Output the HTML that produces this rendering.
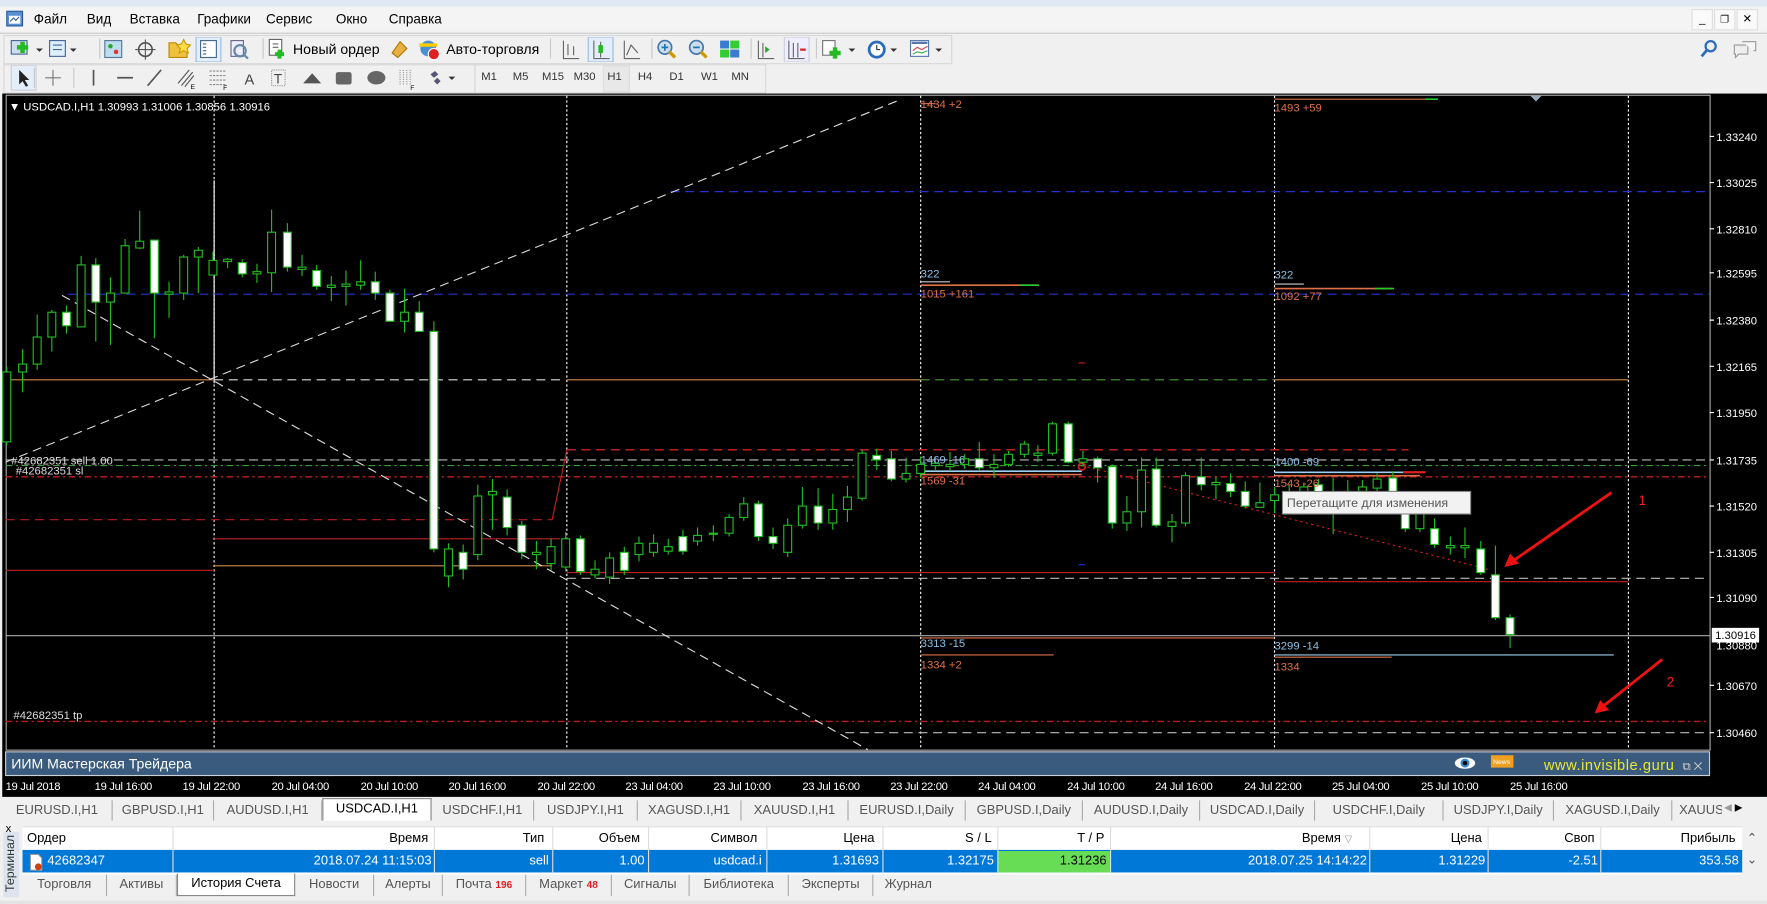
<!DOCTYPE html>
<html><head><meta charset="utf-8">
<style>
html,body{margin:0;padding:0;overflow:hidden;background:#f0f0f0;width:1767px;height:904px}
#r{position:absolute;left:0;top:0;width:1568px;height:802px;transform:scale(1.12691,1.1272);transform-origin:0 0;font-family:"Liberation Sans",sans-serif;color:#000;background:#f0f0f0}
.a{position:absolute;white-space:nowrap}
.m{font-size:12px;top:10px}
.sep{position:absolute;width:1px;background:#c8c8c8}
.ico{position:absolute}
.tf{font-size:10px;color:#333;top:63px}
.tab{position:absolute;top:710px;height:18px;font-size:11.5px;color:#555;line-height:18px;border-right:1px solid #aaa;box-sizing:border-box;text-align:center;white-space:nowrap;overflow:hidden}
.th{position:absolute;top:734px;font-size:11.5px;line-height:20px;height:20px}
.td{position:absolute;top:755px;font-size:11.5px;line-height:19px;height:19px;color:#fff;text-align:right}
.bt{position:absolute;top:776px;height:19px;line-height:19px;font-size:11.5px;color:#555;border-right:1px solid #aaa;box-sizing:border-box;text-align:center;white-space:nowrap}
</style></head><body><div id="r">
<div class="a" style="left:0;top:0;width:1568px;height:6px;background:#dfe8f3"></div>
<div class="a" style="left:0;top:6px;width:1568px;height:22px;background:#f4f4f4"></div>
<svg class="ico" style="left:5px;top:9px" width="16" height="16"><rect x="1" y="1" width="14" height="13" fill="#5a8fd0" stroke="#2a5a9a"/><rect x="3" y="5" width="10" height="7" fill="#fff"/><path d="M4 10l3-3 2 2 3-3" stroke="#3060a0" fill="none"/></svg>
<span class="a m" style="left:30px">Файл</span><span class="a m" style="left:77px">Вид</span><span class="a m" style="left:115px">Вставка</span><span class="a m" style="left:175px">Графики</span><span class="a m" style="left:236px">Сервис</span><span class="a m" style="left:298px">Окно</span><span class="a m" style="left:345px">Справка</span>
<div class="a" style="left:1501px;top:8px;width:17px;height:17px;border:1px solid #ddd;background:#fafafa;font-size:10px;text-align:center;line-height:17px">_</div>
<div class="a" style="left:1521px;top:8px;width:17px;height:17px;border:1px solid #ddd;background:#fafafa;font-size:9px;text-align:center;line-height:17px">&#x2750;</div>
<div class="a" style="left:1541px;top:8px;width:17px;height:17px;border:1px solid #ddd;background:#fafafa;font-size:10px;text-align:center;line-height:17px">✕</div>
<div class="a" style="left:0;top:29px;width:1568px;height:1px;background:#ccc"></div>
<div class="a" style="left:3px;top:31px;width:840px;height:24px;border:1px solid #d8d8d8"></div>
<svg class="ico" style="left:8px;top:33px" width="850" height="22">
<g>
<rect x="2" y="3" width="14" height="12" fill="#cde" stroke="#469"/><path d="M7 9h10M12 4v10" stroke="#2b2" stroke-width="4"/><path d="M24 10l3 3 3-3z" fill="#333"/>
<rect x="36" y="3" width="14" height="14" fill="#def" stroke="#469"/><path d="M39 7h8M39 11h8" stroke="#469"/><path d="M54 10l3 3 3-3z" fill="#333"/>
<rect x="85" y="3" width="15" height="15" fill="#bde" stroke="#579"/><circle cx="90" cy="8" r="2" fill="#2a2"/><circle cx="95" cy="13" r="2" fill="#d33"/>
<circle cx="121" cy="11" r="6" fill="none" stroke="#555" stroke-width="1.5"/><path d="M121 2v18M112 11h18" stroke="#555"/>
<path d="M142 5h6l2 2h8v11h-16z" fill="#f0c040" stroke="#b80"/><path d="M155 2l2 4 4 1-3 3 1 4-4-2-4 2 1-4-3-3 4-1z" fill="#fd4" stroke="#c90"/>
<rect x="166" y="0" width="22" height="22" fill="#e4eefa" stroke="#9bd"/><rect x="170" y="3" width="14" height="15" fill="#fff" stroke="#468"/><path d="M172 6h3M172 9h3M172 12h3M172 15h3" stroke="#468"/>
<rect x="197" y="3" width="11" height="14" fill="#eef" stroke="#668"/><circle cx="205" cy="12" r="5" fill="none" stroke="#68a" stroke-width="2"/><path d="M208 15l4 4" stroke="#68a" stroke-width="2"/>
<rect x="231" y="2" width="11" height="14" fill="#fff" stroke="#666"/><path d="M234 6h5M234 9h5" stroke="#666"/><path d="M236 15h8M240 11v8" stroke="#2b2" stroke-width="3.5"/>
</g>
<text x="252" y="15" font-size="12.5" font-family="Liberation Sans">Новый ордер</text>
<path d="M340 14l7-10 6 6-8 8z" fill="#e8b040" stroke="#a70"/>
<circle cx="372" cy="10" r="7" fill="#4a90d0"/><path d="M364 7h16" stroke="#fc0" stroke-width="3"/><circle cx="377" cy="15" r="5" fill="#d22" stroke="#fff"/>
<text x="388" y="15" font-size="12.5" font-family="Liberation Sans">Авто-торговля</text>
<path d="M492 3v16h14M496 6v10M501 8v8" stroke="#666" fill="none"/>
<rect x="514" y="0" width="22" height="22" fill="#e4eefa" stroke="#9bd"/><path d="M519 3v16h14M525 4v14" stroke="#666" fill="none"/><rect x="523" y="7" width="4" height="7" fill="#2b2"/>
<path d="M546 3v16h14M548 16l4-9 6 7" stroke="#666" fill="none"/>
<circle cx="582" cy="9" r="6" fill="#cde" stroke="#47a" stroke-width="1.5"/><path d="M579 9h6M582 6v6" stroke="#27a" stroke-width="1.5"/><path d="M586 13l5 5" stroke="#c90" stroke-width="3"/>
<circle cx="610" cy="9" r="6" fill="#cde" stroke="#47a" stroke-width="1.5"/><path d="M607 9h6" stroke="#27a" stroke-width="1.5"/><path d="M614 13l5 5" stroke="#c90" stroke-width="3"/>
<rect x="631" y="3" width="8" height="7" fill="#3a7ad0"/><rect x="640" y="3" width="8" height="7" fill="#3c3"/><rect x="631" y="11" width="8" height="7" fill="#3c3"/><rect x="640" y="11" width="8" height="7" fill="#3a7ad0"/>
<path d="M665 3v16h14M669 5v13" stroke="#666" fill="none"/><path d="M671 8l4 3-4 3z" fill="#2a2"/>
<rect x="688" y="0" width="22" height="22" fill="#eef" stroke="#ccd"/><path d="M692 3v16h14M696 5v13M700 5v13" stroke="#666" fill="none"/><path d="M702 11h5" stroke="#d22" stroke-width="2"/>
<rect x="722" y="3" width="11" height="13" fill="#fff" stroke="#777"/><path d="M728 14h10M733 9v10" stroke="#2b2" stroke-width="4"/><path d="M745 10l3 3 3-3z" fill="#333"/>
<circle cx="770" cy="11" r="8" fill="#2a6cc0"/><circle cx="770" cy="11" r="5.5" fill="#fff"/><path d="M770 7v4h3" stroke="#333" fill="none"/><path d="M782 10l3 3 3-3z" fill="#333"/>
<rect x="800" y="3" width="16" height="14" fill="#fff" stroke="#57a"/><path d="M801 5h14" stroke="#57a" stroke-width="2"/><path d="M802 12l4-3 4 2 5-3" stroke="#d44" fill="none"/><path d="M802 15l4-2 4 1 5-2" stroke="#4a4" fill="none"/><path d="M822 10l3 3 3-3z" fill="#333"/>
</svg>
<div class="sep" style="left:88px;top:34px;height:18px"></div><div class="sep" style="left:233px;top:34px;height:18px"></div><div class="sep" style="left:488px;top:34px;height:18px"></div><div class="sep" style="left:578px;top:34px;height:18px"></div><div class="sep" style="left:666px;top:34px;height:18px"></div><div class="sep" style="left:724px;top:34px;height:18px"></div>
<svg class="ico" style="left:1505px;top:34px" width="60" height="20"><circle cx="13" cy="7" r="4.5" fill="none" stroke="#2a6cc0" stroke-width="2"/><path d="M10 10l-5 6" stroke="#2a6cc0" stroke-width="2.5"/><path d="M34 6h12v8h-8l-3 3v-3h-1z" fill="#eee" stroke="#999"/><path d="M41 3h12v8h-2" fill="#f6f6f6" stroke="#999"/></svg>
<div class="a" style="left:3px;top:57px;width:417px;height:24px;border:1px solid #d8d8d8"></div>
<div class="a" style="left:421px;top:57px;width:257px;height:24px;border:1px solid #d8d8d8"></div>
<svg class="ico" style="left:6px;top:58px" width="420" height="23">
<rect x="4" y="0" width="22" height="22" fill="#e4eefa" stroke="#ccd"/><path d="M11 4v13l3-3 3 5 2-1-3-5h4z" fill="#222"/>
<path d="M41 4v14M34 11h14" stroke="#777"/>
<path d="M77 4v14" stroke="#555" stroke-width="1.5"/>
<path d="M98 11h14" stroke="#555" stroke-width="1.5"/>
<path d="M125 18l12-14" stroke="#555" stroke-width="1.5"/>
<path d="M152 16l10-12M155 18l10-12M158 19l8-10" stroke="#555"/><text x="163" y="21" font-size="6">E</text>
<path d="M180 5h14M180 9h14M180 13h14M180 17h14" stroke="#888" stroke-dasharray="2 1"/><text x="192" y="22" font-size="6">F</text>
<text x="211" y="17" font-size="13" fill="#444" font-family="Liberation Sans">A</text>
<rect x="235" y="4" width="12" height="14" fill="none" stroke="#999" stroke-dasharray="1 1"/><text x="237" y="16" font-size="12" fill="#444">T</text>
<path d="M263 16l8-9 8 9z" fill="#555"/>
<rect x="292" y="6" width="14" height="11" rx="2" fill="#666"/>
<ellipse cx="328" cy="11" rx="8" ry="6" fill="#666"/>
<path d="M349 4v14M352 4v14M355 4v14M358 4v14" stroke="#999" stroke-dasharray="1 1"/><text x="358" y="22" font-size="6">F</text>
<path d="M376 8l4-3 3 3-4 3zM379 14l3-3 3 3-3 3z" fill="#557"/><path d="M392 10l3 3 3-3z" fill="#333"/>
</svg>
<div class="sep" style="left:30px;top:60px;height:18px"></div><div class="sep" style="left:65px;top:60px;height:18px"></div>
<div class="a" style="left:535px;top:58px;width:22px;height:22px;background:#e8e8e8;border:1px solid #ddd"></div>
<span class="a tf" style="left:427px">M1</span><span class="a tf" style="left:455px">M5</span><span class="a tf" style="left:481px">M15</span><span class="a tf" style="left:509px">M30</span><span class="a tf" style="left:539px">H1</span><span class="a tf" style="left:566px">H4</span><span class="a tf" style="left:594px">D1</span><span class="a tf" style="left:622px">W1</span><span class="a tf" style="left:649px">MN</span>
<div class="a" style="left:2px;top:83px;width:1566px;height:624px;background:#000"></div>
<svg class="a" style="left:0;top:0" width="1568" height="710" font-family="Liberation Sans">
<rect x="5.5" y="84.5" width="1512" height="581" fill="none" stroke="#aaa"/>
<g stroke="#fff" stroke-dasharray="2 2" stroke-width="1">
<path d="M190 85v580M503 85v580M817 85v580M1131 85v580M1445 85v580"/></g>
<path d="M190 160v180" stroke="#fff"/>
<path d="M595 170H1517M60 261H1517" stroke="#2233cc" stroke-dasharray="8 5"/>
<path d="M5 337H190M503 337H817M1131 337H1445" stroke="#d08848"/>
<path d="M190 337H497" stroke="#ddd" stroke-dasharray="8 5"/>
<path d="M817 337H1131" stroke="#4a9a3a" stroke-dasharray="8 5"/>
<path d="M503 399H1250" stroke="#b82020" stroke-dasharray="8 5" stroke-width="1.3"/>
<path d="M5 408H1517" stroke="#bbb" stroke-dasharray="8 4"/>
<path d="M5 413H1517" stroke="#3a9a3a" stroke-dasharray="6 3 2 3"/>
<path d="M5 423H1517" stroke="#c02020" stroke-dasharray="6 3 2 3" stroke-width="1.2"/>
<path d="M5 461H490" stroke="#b82020" stroke-dasharray="8 5"/>
<path d="M490 461L503 399" stroke="#c02020"/>
<path d="M190 478H497M5 506H190M503 508H1131M1131 516H1445" stroke="#c02020"/>
<path d="M190 502H490" stroke="#d08848"/>
<path d="M503 513H1517" stroke="#bbb" stroke-dasharray="8 5"/>
<path d="M5 564H1517" stroke="#aaa"/>
<path d="M817 566H1131M817 581H935M1131 583H1235M817 92H830M1131 88H1265" stroke="#e07048"/>
<path d="M1131 581H1432" stroke="#9cd0f0"/>
<path d="M817 253H920M1131 256H1235" stroke="#e07048" stroke-width="1.5"/>
<path d="M905 253H922M1220 256H1237M1265 88H1276" stroke="#2c2" stroke-width="1.5"/>
<path d="M817 250H843M1131 252H1157" stroke="#ccc"/>
<path d="M817 418H960M1131 419H1250" stroke="#9cd0f0" stroke-width="1.5"/>
<path d="M817 421H960M1131 422H1260" stroke="#e07048" stroke-width="1.5"/>
<path d="M1245 419H1265" stroke="#e02020" stroke-width="2"/>
<path d="M5 640H1517" stroke="#b82020" stroke-dasharray="6 3 2 3" stroke-width="1.2"/>
<path d="M750 650H1517" stroke="#bbb" stroke-dasharray="8 5"/>
<path d="M55 262L770 665M5 410L800 88" stroke="#ddd" stroke-dasharray="8 5"/>
<path d="M960 413L1320 505" stroke="#d02020" stroke-dasharray="2 3"/>
<path d="M957 322h6" stroke="#c02020"/><path d="M957 501h6" stroke="#2233cc"/>
<circle cx="960" cy="414" r="3" fill="none" stroke="#e02020" stroke-width="1.5"/>
<path d="M1358 85l5 5 5-5z" fill="#9ab"/>
<g fill="#fff" stroke="#22bb22" stroke-width="1">
<path d="M6 325V395M20 310V348M33 279V328M46 275V312M59 271V296M72 227V290M85 229V303M98 246V306M111 212V260M124 187V221M137 213V300M150 250V282M163 226V266M176 219V260M189 223V244M202 229V238M215 230V246M228 234V251M241 186V259M255 198V241M268 226V245M281 235V257M294 245V267M307 240V271M320 231V257M333 241V266M346 257V285M359 256V295M372 267V294M385 285V490M398 482V521M411 483V514M424 430V497M437 425V470M450 434V475M463 462V496M476 480V505M489 478V506M502 472V507M515 475V510M528 497V513M541 490V518M554 485V510M567 476V498M580 474V494M593 478V492M606 470V492M619 468V484M633 466V480M647 456V476M660 441V462M673 444V480M686 468V487M699 460V494M712 432V469M726 433V470M739 438V470M752 431V463M765 399V444M778 398V417M791 400V427M804 406V428M817 405V424M830 405V418M843 401V418M856 403V416M869 392V418M882 403V424M895 400V414M909 391V406M921 395V410M934 374V404M948 374V411M961 400V414M974 405V428M987 412V469M1000 440V471M1013 406V468M1026 406V468M1040 456V481M1052 419V467M1066 406V435M1079 423V443M1092 420V441M1105 427V451M1118 428V450M1131 432V455M1144 430V456M1157 428V450M1170 425V452M1183 424V474M1196 426V450M1209 426V446M1222 420V440M1236 418V442M1247 440V472M1260 436V472M1273 460V486M1287 476V492M1300 468V495M1314 480V510M1327 484V550M1340 545V575"/>
</g>
<g fill="#000" stroke="#22bb22">
<rect x="2.5" y="330" width="7" height="62"/><rect x="16.5" y="323" width="7" height="7"/><rect x="29.5" y="299" width="7" height="24"/><rect x="42.5" y="277" width="7" height="22"/><rect x="68.5" y="235" width="7" height="55"/><rect x="94.5" y="260" width="7" height="8"/><rect x="107.5" y="218" width="7" height="42"/><rect x="120.5" y="214" width="7" height="6"/><rect x="146.5" y="259" width="7" height="2"/><rect x="159.5" y="228" width="7" height="32"/><rect x="172.5" y="222" width="7" height="6"/><rect x="185.5" y="231" width="7" height="13"/><rect x="198.5" y="230" width="7" height="2"/><rect x="224.5" y="241" width="7" height="2"/><rect x="237.5" y="206" width="7" height="36"/><rect x="264.5" y="237" width="7" height="2"/><rect x="290.5" y="253" width="7" height="2"/><rect x="303.5" y="252" width="7" height="2"/><rect x="316.5" y="250" width="7" height="3"/><rect x="355.5" y="277" width="7" height="8"/>
<rect x="394.5" y="487" width="7" height="24"/><rect x="420.5" y="440" width="7" height="52"/><rect x="433.5" y="436" width="7" height="3"/><rect x="472.5" y="490" width="7" height="2"/><rect x="485.5" y="485" width="7" height="15"/><rect x="498.5" y="478" width="7" height="25"/><rect x="524.5" y="505" width="7" height="5"/><rect x="537.5" y="495" width="7" height="17"/><rect x="563.5" y="482" width="7" height="10"/><rect x="576.5" y="482" width="7" height="8"/><rect x="589.5" y="485" width="7" height="4"/><rect x="615.5" y="475" width="7" height="5"/><rect x="629.5" y="473" width="7" height="1"/><rect x="643.5" y="459" width="7" height="14"/><rect x="656.5" y="447" width="7" height="12"/><rect x="695.5" y="466" width="7" height="24"/><rect x="708.5" y="449" width="7" height="17"/><rect x="735.5" y="452" width="7" height="12"/><rect x="748.5" y="441" width="7" height="11"/><rect x="761.5" y="402" width="7" height="40"/><rect x="800.5" y="420" width="7" height="5"/><rect x="813.5" y="412" width="7" height="8"/><rect x="826.5" y="411" width="7" height="2"/><rect x="839.5" y="412" width="7" height="2"/><rect x="852.5" y="407" width="7" height="5"/><rect x="878.5" y="412" width="7" height="3"/><rect x="891.5" y="403" width="7" height="9"/><rect x="905.5" y="394" width="7" height="9"/><rect x="917.5" y="402" width="7" height="2"/><rect x="930.5" y="376" width="7" height="26"/><rect x="957.5" y="407" width="7" height="3"/><rect x="996.5" y="454" width="7" height="10"/><rect x="1009.5" y="417" width="7" height="37"/><rect x="1036.5" y="463" width="7" height="4"/><rect x="1048.5" y="422" width="7" height="42"/><rect x="1075.5" y="428" width="7" height="2"/><rect x="1114.5" y="446" width="7" height="4"/><rect x="1127.5" y="439" width="7" height="5"/><rect x="1140.5" y="438" width="7" height="6"/><rect x="1153.5" y="432" width="7" height="8"/><rect x="1179.5" y="440" width="7" height="5"/><rect x="1192.5" y="436" width="7" height="4"/><rect x="1205.5" y="432" width="7" height="4"/><rect x="1218.5" y="425" width="7" height="8"/><rect x="1256.5" y="444" width="7" height="25"/><rect x="1283.5" y="484" width="7" height="2"/><rect x="1296.5" y="484" width="7" height="2"/>
</g>
<g fill="#fff" stroke="#22bb22">
<rect x="55.5" y="277" width="7" height="12"/><rect x="81.5" y="235" width="7" height="33"/><rect x="133.5" y="213" width="7" height="47"/><rect x="211.5" y="233" width="7" height="10"/><rect x="251.5" y="206" width="7" height="31"/><rect x="277.5" y="240" width="7" height="14"/><rect x="329.5" y="250" width="7" height="10"/><rect x="342.5" y="260" width="7" height="25"/><rect x="368.5" y="277" width="7" height="17"/><rect x="381.5" y="294" width="7" height="193"/>
<rect x="407.5" y="490" width="7" height="15"/><rect x="446.5" y="441" width="7" height="27"/><rect x="459.5" y="466" width="7" height="24"/><rect x="511.5" y="478" width="7" height="29"/><rect x="550.5" y="490" width="7" height="16"/><rect x="602.5" y="476" width="7" height="13"/><rect x="669.5" y="447" width="7" height="29"/><rect x="682.5" y="476" width="7" height="6"/><rect x="722.5" y="449" width="7" height="15"/><rect x="774.5" y="404" width="7" height="4"/><rect x="787.5" y="407" width="7" height="18"/><rect x="865.5" y="407" width="7" height="8"/><rect x="944.5" y="376" width="7" height="34"/><rect x="970.5" y="407" width="7" height="8"/><rect x="983.5" y="414" width="7" height="50"/><rect x="1022.5" y="416" width="7" height="50"/><rect x="1062.5" y="423" width="7" height="7"/><rect x="1088.5" y="429" width="7" height="7"/><rect x="1101.5" y="436" width="7" height="13"/><rect x="1166.5" y="430" width="7" height="10"/><rect x="1232.5" y="424" width="7" height="12"/><rect x="1243.5" y="446" width="7" height="23"/><rect x="1269.5" y="469" width="7" height="14"/><rect x="1310.5" y="487" width="7" height="21"/><rect x="1323.5" y="510" width="7" height="38"/><rect x="1336.5" y="548" width="7" height="15"/>
</g>
<g font-size="10">
<text x="8" y="98" fill="#fff">▼ USDCAD.I,H1  1.30993 1.31006 1.30856 1.30916</text>
<text x="817" y="96" fill="#e07048">1434 +2</text><text x="1131" y="99" fill="#e07048">1493 +59</text>
<text x="817" y="246" fill="#8cc0e8">322</text><text x="817" y="264" fill="#e07048">1015 +161</text>
<text x="1131" y="247" fill="#8cc0e8">322</text><text x="1131" y="266" fill="#e07048">1092 +77</text>
<text x="817" y="411" fill="#8cc0e8">1469 -16</text><text x="817" y="430" fill="#e07048">1569 -31</text>
<text x="1131" y="413" fill="#8cc0e8">1400 -69</text><text x="1131" y="432" fill="#e07048">1543 -26</text>
<text x="817" y="574" fill="#8cc0e8">3313 -15</text><text x="817" y="593" fill="#e07048">1334 +2</text>
<text x="1131" y="576" fill="#8cc0e8">3299 -14</text><text x="1131" y="595" fill="#e07048">1334</text>
<text x="10" y="412" fill="#ddd">#42682351 sell 1.00</text><text x="14" y="421" fill="#ddd">#42682351 sl</text><text x="12" y="638" fill="#ddd">#42682351 tp</text>
</g>
<g font-size="10" fill="#fff">
<text x="1523" y="125">1.33240</text><text x="1523" y="166">1.33025</text><text x="1523" y="207">1.32810</text><text x="1523" y="246">1.32595</text><text x="1523" y="288">1.32380</text><text x="1523" y="329">1.32165</text><text x="1523" y="370">1.31950</text><text x="1523" y="412">1.31735</text><text x="1523" y="453">1.31520</text><text x="1523" y="494">1.31305</text><text x="1523" y="534">1.31090</text><text x="1523" y="576">1.30880</text><text x="1523" y="612">1.30670</text><text x="1523" y="654">1.30460</text>
</g>
<path d="M1517 121h4M1517 162h4M1517 203h4M1517 242h4M1517 284h4M1517 325h4M1517 366h4M1517 408h4M1517 449h4M1517 490h4M1517 530h4M1517 608h4M1517 650h4" stroke="#fff"/>
<rect x="1519" y="557" width="42" height="13" fill="#fff"/><text x="1522" y="567" font-size="10" fill="#000">1.30916</text>
<rect x="1138" y="436" width="167" height="20" fill="#f2f2f2" stroke="#888"/><text x="1142" y="450" font-size="11" fill="#555">Перетащите для изменения</text>
<path d="M1430 437L1342 498" stroke="#ee1111" stroke-width="2.5"/><path d="M1335 503l5-12 8 9z" fill="#ee1111"/>
<path d="M1475 585L1422 627" stroke="#ee1111" stroke-width="2.5"/><path d="M1415 633l5-12 8 9z" fill="#ee1111"/>
<text x="1454" y="448" font-size="12" fill="#ee2222">1</text><text x="1479" y="609" font-size="12" fill="#ee2222">2</text>
<rect x="5" y="667" width="1512" height="21" fill="#3b5b7e" stroke="#c8d0d8"/>
<text x="10" y="682" font-size="12.5" fill="#fff">ИИМ Мастерская Трейдера</text>
<ellipse cx="1300" cy="677" rx="9" ry="5" fill="#fff"/><circle cx="1300" cy="677" r="4" fill="#3a8ad0"/><circle cx="1300" cy="677" r="2" fill="#000"/>
<rect x="1323" y="670" width="20" height="11" fill="#f0a020"/><text x="1325" y="678" font-size="6" fill="#fff">News</text>
<text x="1370" y="683" font-size="13" fill="#e8e830" letter-spacing="0.5">www.invisible.guru</text>
<text x="1493" y="683" font-size="10" fill="#ccc">⧉ ✕</text>
<g font-size="10" fill="#fff" letter-spacing="-0.3">
<text x="5" y="701">19 Jul 2018</text><text x="84" y="701">19 Jul 16:00</text><text x="162" y="701">19 Jul 22:00</text><text x="241" y="701">20 Jul 04:00</text><text x="320" y="701">20 Jul 10:00</text><text x="398" y="701">20 Jul 16:00</text><text x="477" y="701">20 Jul 22:00</text><text x="555" y="701">23 Jul 04:00</text><text x="633" y="701">23 Jul 10:00</text><text x="712" y="701">23 Jul 16:00</text><text x="790" y="701">23 Jul 22:00</text><text x="868" y="701">24 Jul 04:00</text><text x="947" y="701">24 Jul 10:00</text><text x="1025" y="701">24 Jul 16:00</text><text x="1104" y="701">24 Jul 22:00</text><text x="1182" y="701">25 Jul 04:00</text><text x="1261" y="701">25 Jul 10:00</text><text x="1340" y="701">25 Jul 16:00</text>
</g>
</svg>
<div class="a" style="left:0;top:707px;width:1568px;height:22px;background:#f0f0f0"></div>
<div class="tab" style="left:2px;width:98px">EURUSD.I,H1</div><div class="tab" style="left:100px;width:90px">GBPUSD.I,H1</div><div class="tab" style="left:190px;width:96px">AUDUSD.I,H1</div>
<div class="tab" style="left:286px;width:97px;top:708px;height:20px;background:#fff;color:#000;border:1px solid #888;border-bottom:none">USDCAD.I,H1</div>
<div class="tab" style="left:383px;width:91px">USDCHF.I,H1</div><div class="tab" style="left:474px;width:92px">USDJPY.I,H1</div><div class="tab" style="left:566px;width:92px">XAGUSD.I,H1</div><div class="tab" style="left:658px;width:95px">XAUUSD.I,H1</div><div class="tab" style="left:753px;width:104px">EURUSD.I,Daily</div><div class="tab" style="left:857px;width:104px">GBPUSD.I,Daily</div><div class="tab" style="left:961px;width:104px">AUDUSD.I,Daily</div><div class="tab" style="left:1065px;width:102px">USDCAD.I,Daily</div><div class="tab" style="left:1167px;width:114px">USDCHF.I,Daily</div><div class="tab" style="left:1281px;width:98px">USDJPY.I,Daily</div><div class="tab" style="left:1379px;width:105px">XAGUSD.I,Daily</div><div class="tab" style="left:1484px;width:44px;border:none;text-align:left;padding-left:6px">XAUUS</div>
<div class="a" style="left:1530px;top:711px;font-size:9px;color:#999">◀ <span style="color:#000">▶</span></div>
<div class="a" style="left:0;top:729px;width:1568px;height:73px;background:#f0f0f0"></div>
<div class="a" style="left:3px;top:738px;width:14px;height:58px;background:#dde4ee"></div>
<div class="a" style="left:5px;top:730px;font-size:10px">x</div>
<div class="a" style="left:-16px;top:760px;font-size:11px;transform:rotate(-90deg);color:#333">Терминал</div>
<div class="a" style="left:20px;top:733px;width:1526px;height:42px;background:#fff;border-top:1px solid #ddd"></div>
<div class="a" style="left:20px;top:754px;width:1526px;height:20px;background:#0078d7"></div>
<div class="a" style="left:885px;top:755px;width:100px;height:19px;background:#66dd55"></div>
<div class="a" style="left:153px;top:733px;width:1px;height:42px;background:#ddd"></div>
<div class="a" style="left:385px;top:733px;width:1px;height:42px;background:#ddd"></div><div class="a" style="left:490px;top:733px;width:1px;height:42px;background:#ddd"></div><div class="a" style="left:575px;top:733px;width:1px;height:42px;background:#ddd"></div><div class="a" style="left:680px;top:733px;width:1px;height:42px;background:#ddd"></div><div class="a" style="left:783px;top:733px;width:1px;height:42px;background:#ddd"></div><div class="a" style="left:885px;top:733px;width:1px;height:42px;background:#ddd"></div><div class="a" style="left:985px;top:733px;width:1px;height:42px;background:#ddd"></div><div class="a" style="left:1215px;top:733px;width:1px;height:42px;background:#ddd"></div><div class="a" style="left:1320px;top:733px;width:1px;height:42px;background:#ddd"></div><div class="a" style="left:1420px;top:733px;width:1px;height:42px;background:#ddd"></div>
<div class="th" style="left:24px">Ордер</div>
<div class="th" style="left:153px;width:227px;text-align:right">Время</div><div class="th" style="left:385px;width:98px;text-align:right">Тип</div><div class="th" style="left:490px;width:78px;text-align:right">Объем</div><div class="th" style="left:575px;width:97px;text-align:right">Символ</div><div class="th" style="left:680px;width:96px;text-align:right">Цена</div><div class="th" style="left:783px;width:97px;text-align:right">S / L</div><div class="th" style="left:885px;width:95px;text-align:right">T / P</div><div class="th" style="left:985px;width:215px;text-align:right">Время <span style="color:#999;font-size:9px">▽</span></div><div class="th" style="left:1215px;width:100px;text-align:right">Цена</div><div class="th" style="left:1320px;width:95px;text-align:right">Своп</div><div class="th" style="left:1420px;width:120px;text-align:right">Прибыль</div>
<svg class="ico" style="left:25px;top:757px" width="14" height="16"><path d="M2 1h7l3 3v11H2z" fill="#fff" stroke="#999"/><circle cx="9" cy="12" r="3" fill="#d04010"/></svg>
<div class="td" style="left:42px;text-align:left">42682347</div>
<div class="td" style="left:153px;width:230px">2018.07.24 11:15:03</div><div class="td" style="left:385px;width:102px">sell</div><div class="td" style="left:490px;width:82px">1.00</div><div class="td" style="left:575px;width:101px">usdcad.i</div><div class="td" style="left:680px;width:100px">1.31693</div><div class="td" style="left:783px;width:99px">1.32175</div><div class="td" style="left:885px;width:97px;color:#000">1.31236</div><div class="td" style="left:985px;width:228px">2018.07.25 14:14:22</div><div class="td" style="left:1215px;width:103px">1.31229</div><div class="td" style="left:1320px;width:98px">-2.51</div><div class="td" style="left:1420px;width:123px">353.58</div>
<div class="a" style="left:1550px;top:737px;font-size:11px;color:#555">&#8963;</div><div class="a" style="left:1550px;top:756px;font-size:11px;color:#555">&#8964;</div>
<div class="bt" style="left:20px;width:75px">Торговля</div><div class="bt" style="left:95px;width:62px">Активы</div>
<div class="bt" style="left:157px;width:105px;top:775px;height:20px;background:#fff;color:#000;border:1px solid #888;border-top:none">История Счета</div>
<div class="bt" style="left:262px;width:70px">Новости</div><div class="bt" style="left:332px;width:61px">Алерты</div><div class="bt" style="left:393px;width:74px">Почта <span style="color:#e02020;font-size:9px;font-weight:bold">196</span></div><div class="bt" style="left:467px;width:76px">Маркет <span style="color:#e02020;font-size:9px;font-weight:bold">48</span></div><div class="bt" style="left:543px;width:69px">Сигналы</div><div class="bt" style="left:612px;width:88px">Библиотека</div><div class="bt" style="left:700px;width:75px">Эксперты</div><div class="bt" style="left:775px;width:62px;border:none">Журнал</div>
<div class="a" style="left:0;top:799px;width:1568px;height:3px;background:#e4e4e4"></div>
</div></body></html>
